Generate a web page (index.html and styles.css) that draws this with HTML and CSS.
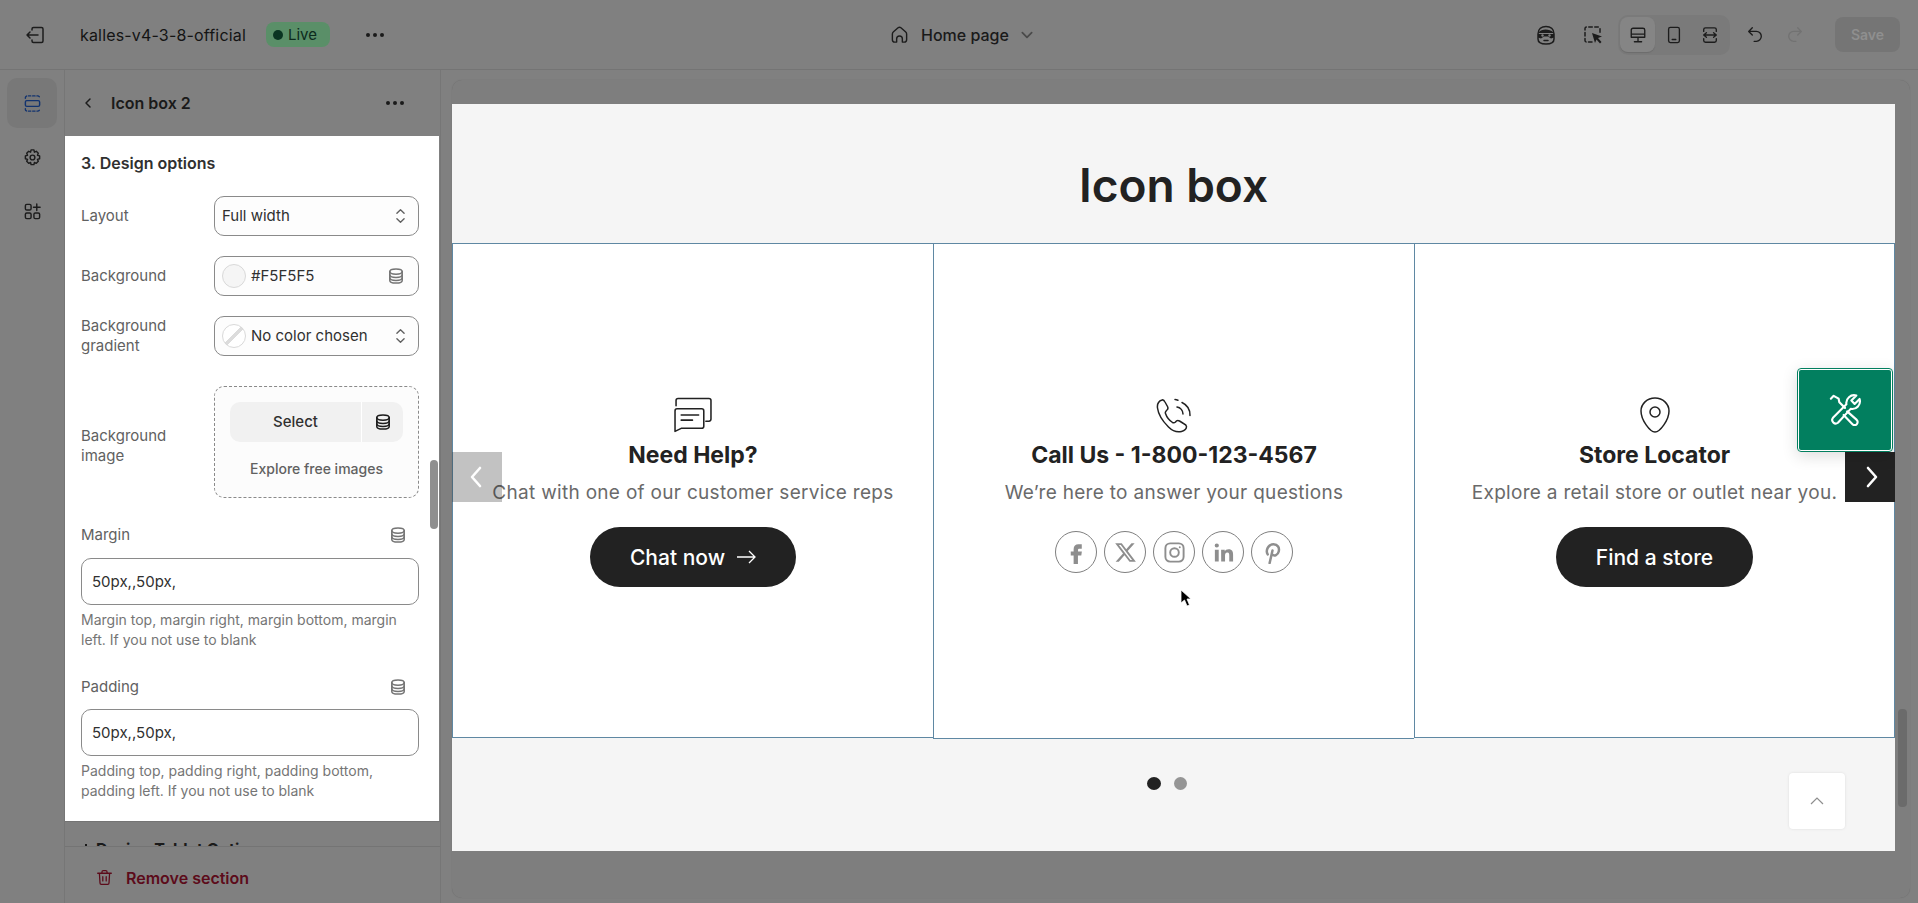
FILE: index.html
```html
<!DOCTYPE html>
<html lang="en">

<head>
    <meta charset="utf-8">
    <title>Icon box 2</title>
    <link rel="stylesheet" href="styles.css">
</head>

<body>
    <svg class="icon_defs" width="0" height="0">
        <symbol id="db" viewBox="0 0 16 16">
            <ellipse cx="8" cy="3.6" rx="6.2" ry="2.6" />
            <path d="M1.8 3.6v8.8c0 1.5 2.8 2.6 6.2 2.6s6.2-1.100 6.200-2.600V3.600" />
            <path d="M1.800 6.800c0 1.500 2.800 2.600 6.200 2.600s6.2-1.100 6.200-2.600M1.800 9.800c0 1.500 2.800 2.600 6.200 2.600s6.2-1.100 6.200-2.600" />
        </symbol>
        <symbol id="updown" viewBox="0 0 12 20">
            <path d="M2 7l4-4 4 4M2 13l4 4 4-4" />
        </symbol>
    </svg>

    <!-- TOP BAR -->
    <header class="topbar">
        <div class="topbar_left">
            <svg class="ic exit_icon" viewBox="0 0 20 20">
                <path d="M7 5V4a1.500 1.500 0 0 1 1.500-1.500h8A1.500 1.500 0 0 1 18 4v12a1.500 1.500 0 0 1-1.500 1.500h-8A1.500 1.500 0 0 1 7 16v-1" />
                <path d="M13 10H2M5 7l-3 3 3 3" />
            </svg>
            <span class="store_name">kalles-v4-3-8-official</span>
            <span class="live_badge"><i class="live_dot"></i>Live</span>
            <span class="dots topbar_dots"><i></i><i></i><i></i></span>
        </div>
        <div class="topbar_center">
            <svg class="ic home_icon" viewBox="0 0 20 20">
                <path d="M2.500 9.500c0-1 .5-1.800 1.200-2.400l4.800-4.200a2.300 2.300 0 0 1 3 0l4.800 4.200c.7.600 1.200 1.400 1.200 2.400v6a2.500 2.500 0 0 1-2.500 2.500H13v-3.500a3 3 0 0 0-6 0V18H5a2.500 2.500 0 0 1-2.500-2.500z" />
            </svg>
            <span class="page_name">Home page</span>
            <svg class="ic page_chevron" viewBox="0 0 12 12"><path d="M2 4l4 4 4-4" /></svg>
        </div>
        <div class="topbar_right">
            <svg class="ic robin_icon" viewBox="0 0 20 20">
                <path d="M2 9c0-5 3.500-7.500 8-7.500S18 4 18 9v5c0 3-3 5-8 5s-8-2-8-5z" />
                <path class="solid" d="M3 7c2-3.500 11-3.500 14 0v1H3zM2 9h16v3.500l-3 1-3-2H8l-3 2-3-1z" />
                <circle class="cut" cx="6.500" cy="10.500" r="1.200" />
                <circle class="cut" cx="13.500" cy="10.500" r="1.200" />
                <path d="M8 15.500h4" />
            </svg>
            <svg class="ic select_icon" viewBox="0 0 20 20">
                <path stroke-dasharray="3.500 2.500" d="M9 17H3.500A1.500 1.500 0 0 1 2 15.500v-12A1.500 1.500 0 0 1 3.500 2h12A1.500 1.500 0 0 1 17 3.500V8" />
                <path class="solid" d="M9 8l10 3.500-4 1.500 3.500 4-1.500 1.500-3.500-4L12 18z" />
            </svg>
            <div class="device_group">
                <span class="device_btn device_active">
                    <svg class="ic" viewBox="0 0 20 20">
                        <path d="M4.500 2.500h11A2 2 0 0 1 17.500 4.500v8h-15v-8a2 2 0 0 1 2-2zM2.500 9h15M10 12.500v5M6 17.500h8" />
                    </svg>
                </span>
                <span class="device_btn">
                    <svg class="ic" viewBox="0 0 20 20">
                        <rect x="4" y="1.500" width="12" height="17" rx="2" />
                        <path d="M8 15h4" />
                    </svg>
                </span>
                <span class="device_btn">
                    <svg class="ic" viewBox="0 0 20 20">
                        <path d="M3 6V4a2 2 0 0 1 2-2h10a2 2 0 0 1 2 2v2M3 14v2a2 2 0 0 0 2 2h10a2 2 0 0 0 2-2v-2M3 10h14M6 7.500L3 10l3 2.500M14 7.500l3 2.500-3 2.500" />
                    </svg>
                </span>
            </div>
            <svg class="ic undo_icon" viewBox="0 0 20 20"><path d="M7 2L3 6l4 4M3 6h8.500a5.500 5.500 0 0 1 0 11H9" /></svg>
            <svg class="ic redo_icon" viewBox="0 0 20 20"><path d="M13 2l4 4-4 4M17 6H8.500a5.500 5.500 0 0 0 0 11H11" /></svg>
            <span class="save_btn">Save</span>
        </div>
    </header>

    <div class="workspace">
        <!-- LEFT RAIL -->
        <nav class="rail">
            <span class="rail_btn rail_active">
                <svg class="ic" viewBox="0 0 20 20">
                    <rect x="2.500" y="7" width="15" height="6" rx="1.500" />
                    <path stroke-dasharray="2.500 2" d="M2.500 4.500v-.500a2 2 0 0 1 2-2h11a2 2 0 0 1 2 2v.500M2.500 15.500v.500a2 2 0 0 0 2 2h11a2 2 0 0 0 2-2v-.500" />
                </svg>
            </span>
            <span class="rail_btn">
                <svg class="ic" viewBox="0 0 20 20">
                    <path d="M8.500 2h3l.500 2.400 2-.900 2.100 2.100-.900 2 2.300.700v3l-2.300.700.900 2-2.100 2.100-2-.900-.500 2.300h-3l-.500-2.300-2 .900-2.100-2.100.900-2-2.300-.700v-3l2.300-.700-.900-2L6 3.500l2 .900z" />
                    <circle cx="10" cy="10" r="2.500" />
                </svg>
            </span>
            <span class="rail_btn">
                <svg class="ic" viewBox="0 0 20 20">
                    <rect x="2.500" y="2.500" width="6" height="6" rx="1.500" />
                    <rect x="2.500" y="11.500" width="6" height="6" rx="1.500" />
                    <rect x="11.500" y="11.500" width="6" height="6" rx="1.500" />
                    <path d="M14.500 2v7M11 5.500h7" />
                </svg>
            </span>
        </nav>

        <!-- SETTINGS PANEL -->
        <aside class="panel">
            <div class="panel_head">
                <svg class="ic back_icon" viewBox="0 0 12 12"><path d="M8 2L4 6l4 4" /></svg>
                <span class="panel_title">Icon box 2</span>
                <span class="dots panel_dots"><i></i><i></i><i></i></span>
            </div>

            <div class="panel_body">
                <h3 class="group_title">3. Design options</h3>

                <div class="row">
                    <label class="row_label">Layout</label>
                    <div class="field">
                        <span class="field_text">Full width</span>
                        <svg class="ic updown"><use href="#updown" /></svg>
                    </div>
                </div>

                <div class="row">
                    <label class="row_label">Background</label>
                    <div class="field">
                        <i class="swatch"></i>
                        <span class="field_text">#F5F5F5</span>
                        <svg class="ic db_icon"><use href="#db" /></svg>
                    </div>
                </div>

                <div class="row">
                    <label class="row_label">Background gradient</label>
                    <div class="field">
                        <i class="swatch swatch_none"></i>
                        <span class="field_text">No color chosen</span>
                        <svg class="ic updown"><use href="#updown" /></svg>
                    </div>
                </div>

                <div class="row row_image">
                    <label class="row_label">Background image</label>
                    <div class="image_box">
                        <div class="select_btn">
                            <span class="select_text">Select</span>
                            <span class="select_db"><svg class="ic db_icon db_dark"><use href="#db" /></svg></span>
                        </div>
                        <span class="explore">Explore free images</span>
                    </div>
                </div>

                <div class="stack stack_margin">
                    <div class="stack_head">
                        <label class="row_label">Margin</label>
                        <svg class="ic db_icon stack_db"><use href="#db" /></svg>
                    </div>
                    <div class="text_input">50px,,50px,</div>
                    <p class="hint">Margin top, margin right, margin bottom, margin left. If you not use to blank</p>
                </div>

                <div class="stack stack_padding">
                    <div class="stack_head">
                        <label class="row_label">Padding</label>
                        <svg class="ic db_icon stack_db"><use href="#db" /></svg>
                    </div>
                    <div class="text_input">50px,,50px,</div>
                    <p class="hint">Padding top, padding right, padding bottom, padding left. If you not use to blank</p>
                </div>

                <span class="panel_scroll"></span>
            </div>

            <div class="panel_more"><i class="more_mark"></i><span class="more_text">Design Tablet Options</span></div>

            <div class="panel_foot">
                <svg class="ic trash_icon" viewBox="0 0 20 20">
                    <path d="M2 5h16M7 5V3.500A1.500 1.500 0 0 1 8.500 2h3A1.500 1.500 0 0 1 13 3.500V5M4 5l.7 11.500A1.500 1.500 0 0 0 6.200 18h7.600a1.500 1.500 0 0 0 1.500-1.500L16 5M8 9v5M12 9v5" />
                </svg>
                <span class="remove_text">Remove section</span>
            </div>
        </aside>

        <!-- PREVIEW -->
        <main class="frame">
            <div class="page">
                <h1 class="page_title">Icon box</h1>

                <div class="boxes">
                    <div class="box">
                        <svg class="box_icon" viewBox="0 0 37 34">
                            <path d="M1 13a2 2 0 0 1 2-2h24a2 2 0 0 1 2 2v15a2 2 0 0 1-2 2H7l-6 3z" />
                            <path d="M2 8V3a2 2 0 0 1 2-2h30a2 2 0 0 1 2 2v18a2 2 0 0 1-2 2h-3M7 17h17M7 22h11" />
                        </svg>
                        <h2 class="box_title">Need Help?</h2>
                        <p class="box_text">Chat with one of our customer service reps</p>
                        <span class="box_btn">Chat now
                            <svg class="arrow_icon" viewBox="0 0 20 14"><path d="M1 7h18M13 1l6 6-6 6" /></svg>
                        </span>
                    </div>

                    <div class="box box_middle">
                        <svg class="box_icon" viewBox="0 0 36 36">
                            <path d="M6 3C3 4 1 7 1.500 11c1 8 6 14 11 19 4 4 9 5.500 13 4.500 3-.8 5-3 5-5 0-1-1-2-3-3l-4-2.500c-2-1-3-.500-4 1-1 1-2 1-3 .500-3-2-6-6-7-9-.500-1 0-2 1-3 1.500-1 2-2 1-4L9 5C8 3 7 2.600 6 3z" />
                            <path d="M19 2.500c1 0 2 .300 3 .700" />
                            <path d="M26 5.500a14 14 0 0 1 8 13" />
                            <path d="M21 10a7 7 0 0 1 6 7" />
                        </svg>
                        <h2 class="box_title">Call Us - 1-800-123-4567</h2>
                        <p class="box_text">We’re here to answer your questions</p>
                        <div class="socials">
                            <span class="social">
                                <svg viewBox="0 0 24 24"><path class="fill" d="M14 8h3.500V3.500H14c-3 0-5 2-5 5V11H6v4h3v9h4.500v-9H17l.6-4h-4V9c0-.6.400-1 1-1z" /></svg>
                            </span>
                            <span class="social">
                                <svg viewBox="0 0 24 24"><path class="fill" d="M18.244 2.250h3.308l-7.227 8.260 8.502 11.240H16.170l-5.214-6.817L4.990 21.750H1.680l7.730-8.835L1.254 2.250H8.080l4.713 6.231zm-1.161 17.520h1.833L7.084 4.126H5.117z" /></svg>
                            </span>
                            <span class="social">
                                <svg viewBox="0 0 24 24">
                                    <rect x="2.500" y="2.500" width="19" height="19" rx="5" />
                                    <circle cx="12" cy="12" r="4.500" />
                                    <circle class="fill" cx="17.500" cy="6.500" r="1" />
                                </svg>
                            </span>
                            <span class="social">
                                <svg viewBox="0 0 24 24"><path class="fill" d="M3 9h4v12.500H3zM5 2.500a2.200 2.200 0 1 1 0 4.400 2.200 2.200 0 0 1 0-4.400zM9.500 9h3.800v1.700c.6-1 2-2 4-2 3.900 0 4.700 2.500 4.700 5.700v7.100h-4v-6.300c0-1.500 0-3.300-2-3.300s-2.400 1.500-2.400 3.200v6.400h-4z" /></svg>
                            </span>
                            <span class="social">
                                <svg viewBox="0 0 24 24"><path class="thick" d="M9 23l3-13M7 14c-2.500-4 .5-10.500 6-10.500 4.500 0 6.500 3.500 5.500 7.500-.8 3.500-4.500 5.500-7 3" /></svg>
                            </span>
                        </div>
                    </div>

                    <div class="box">
                        <svg class="box_icon" viewBox="0 0 30 36">
                            <path d="M15 1C7 1 1 7 1 14c0 9 9 21 14 21s14-12 14-21C29 7 23 1 15 1z" />
                            <circle cx="15" cy="15" r="5" />
                        </svg>
                        <h2 class="box_title">Store Locator</h2>
                        <p class="box_text">Explore a retail store or outlet near you.</p>
                        <span class="box_btn">Find a store</span>
                    </div>
                </div>

                <div class="pager">
                    <i class="pager_dot pager_on"></i>
                    <i class="pager_dot"></i>
                </div>

                <span class="slide_arrow arrow_prev">
                    <svg viewBox="0 0 14 24"><path d="M11 3l-8 9 8 9" /></svg>
                </span>
                <span class="slide_arrow arrow_next">
                    <svg viewBox="0 0 14 24"><path d="M3 3l8 9-8 9" /></svg>
                </span>
                <span class="tool_btn">
                    <svg viewBox="0 0 24 24">
                        <path d="M3.500 17.500L13 8a5.500 5.500 0 0 1 7-6.200l-3.500 3.500 2.300 2.400 3.500-3.500a5.500 5.500 0 0 1-6.300 7L7 21a2.500 2.500 0 0 1-3.500-3.500z" />
                        <path d="M2 4l2-2 3.500 2 .5 2.500 4 4M13.500 13l6.800 6a2.100 2.100 0 0 1-3 3l-6.300-6.500" />
                    </svg>
                </span>
                <span class="top_btn">
                    <svg viewBox="0 0 16 10"><path d="M2 8l6-6 6 6" /></svg>
                </span>
                <svg class="cursor" viewBox="0 0 12 18">
                    <path d="M1 1v13l3.500-3 2.500 6 2.500-1-2.500-6H11z" />
                </svg>
            </div>
            <span class="frame_scroll"></span>
        </main>
    </div>
</body>

</html>
```

FILE: styles.css
```css
* {
    box-sizing: border-box;
}

html,
body {
    margin: 0;
    height: 903px;
    overflow: hidden;
}

body {
    font-family: Inter, "Liberation Sans", sans-serif;
    font-size: 15px;
    color: #161616;
    background-color: #808080;
}

.icon_defs {
    position: absolute;
}

.ic {
    fill: none;
    stroke: #1c1c1c;
    stroke-width: 1.5;
    stroke-linecap: round;
    stroke-linejoin: round;
    flex-shrink: 0;
}

.ic .solid {
    fill: #1c1c1c;
    stroke: none;
}

.ic .cut {
    fill: #808080;
    stroke: none;
}

.dots {
    display: flex;
    gap: 3px;
}

.dots i {
    width: 4px;
    height: 4px;
    border-radius: 50%;
    background-color: #1a1a1a;
}

/* top bar */
.topbar {
    height: 70px;
    display: flex;
    align-items: center;
    position: relative;
    background-color: #808080;
    border-bottom: 1px solid #747474;
}

.topbar_left {
    display: flex;
    align-items: center;
    padding-left: 25px;
}

.exit_icon {
    width: 20px;
    height: 20px;
}

.store_name {
    margin-left: 35px;
    font-size: 16px;
    letter-spacing: 0.17px;
    color: #141414;
}

.live_badge {
    display: flex;
    align-items: center;
    width: 64px;
    height: 25px;
    margin-left: 20px;
    padding-left: 7px;
    border-radius: 8px;
    font-size: 15px;
    color: #0c2b1c;
    background-color: #5a8f68;
}

.live_dot {
    width: 10px;
    height: 10px;
    margin-right: 5px;
    border-radius: 50%;
    background-color: #0a3522;
}

.topbar_dots {
    margin-left: 36px;
}

.topbar_center {
    position: absolute;
    left: 890px;
    display: flex;
    align-items: center;
}

.home_icon {
    width: 19px;
    height: 19px;
}

.page_name {
    margin-left: 12px;
    font-size: 16px;
    font-weight: 500;
    color: #1a1a1a;
}

.page_chevron {
    width: 14px;
    height: 14px;
    margin-left: 11px;
    stroke: #4a4a4a;
}

.topbar_right {
    margin-left: auto;
    padding-right: 18px;
    display: flex;
    align-items: center;
}

.robin_icon {
    width: 20px;
    height: 20px;
}

.select_icon {
    width: 20px;
    height: 20px;
    margin-left: 27px;
}

.device_group {
    display: flex;
    align-items: center;
    gap: 1px;
    height: 40px;
    width: 112px;
    margin-left: 15px;
    padding-left: 2px;
    border-radius: 10px;
    background-color: #7a7a7a;
}

.device_btn {
    width: 35px;
    height: 35px;
    display: flex;
    align-items: center;
    justify-content: center;
    border-radius: 8px;
}

.device_btn .ic {
    width: 18px;
    height: 18px;
}

.device_active {
    background-color: #858585;
    box-shadow: 0 1px 1px #6c6c6c;
}

.undo_icon,
.redo_icon {
    width: 18px;
    height: 18px;
}

.undo_icon {
    margin-left: 16px;
}

.redo_icon {
    margin-left: 22px;
    stroke: #727272;
}

.save_btn {
    width: 65px;
    height: 35px;
    margin-left: 31px;
    display: flex;
    align-items: center;
    justify-content: center;
    border-radius: 8px;
    font-size: 14px;
    font-weight: 600;
    color: #8f8f8f;
    background-color: #757575;
}

/* main area */
.workspace {
    display: flex;
    height: 833px;
}

.rail {
    width: 65px;
    display: flex;
    flex-direction: column;
    align-items: center;
    padding: 8px 0 0;
    gap: 4px;
    background-color: #808080;
    border-right: 1px solid #767676;
}

.rail_btn {
    width: 50px;
    height: 50px;
    display: flex;
    align-items: center;
    justify-content: center;
    border-radius: 10px;
}

.rail_btn .ic {
    width: 19px;
    height: 19px;
}

.rail_active {
    background-color: #787878;
}

.rail_active .ic {
    stroke: #12336f;
}

.panel {
    width: 376px;
    display: flex;
    flex-direction: column;
    background-color: #808080;
    border-right: 1px solid #767676;
}

.panel_head {
    height: 66px;
    flex-shrink: 0;
    display: flex;
    align-items: center;
    padding: 0 36px 0 17px;
}

.back_icon {
    width: 12px;
    height: 12px;
}

.panel_title {
    margin-left: 17px;
    font-size: 16px;
    font-weight: 600;
    color: #1a1a1a;
}

.panel_dots {
    margin-left: auto;
}

/* white part of the panel */
.panel_body {
    position: relative;
    width: 374px;
    height: 685px;
    flex-shrink: 0;
    padding: 0 20px 0 16px;
    overflow: hidden;
    background-color: #ffffff;
}

.group_title {
    margin: 0;
    padding-top: 17px;
    font-size: 16px;
    line-height: 20px;
    font-weight: 600;
    color: #303030;
}

.row {
    display: flex;
    align-items: center;
    height: 40px;
    margin-top: 20px;
}

.group_title + .row {
    margin-top: 23px;
}

.row_label {
    width: 133px;
    flex-shrink: 0;
    padding-right: 30px;
    font-size: 15px;
    line-height: 20px;
    color: #616161;
}

.field {
    width: 205px;
    height: 40px;
    display: flex;
    align-items: center;
    padding: 0 7px 1px;
    border: 1px solid #8a8a8a;
    border-radius: 10px;
    background-color: #fdfdfd;
}

.field_text {
    flex: 1;
    font-size: 15px;
    color: #303030;
}

.swatch {
    width: 24px;
    height: 24px;
    margin-right: 5px;
    border: 1px solid #d9d9d9;
    border-radius: 50%;
    background-color: #f5f5f5;
}

.swatch_none {
    background: linear-gradient(135deg, #fff 44%, #dcdcdc 44%, #dcdcdc 56%, #fff 56%);
}

.updown {
    width: 11px;
    height: 18px;
    margin-right: 5px;
    stroke: #616161;
}

.db_icon {
    width: 16px;
    height: 16px;
    margin-right: 7px;
    stroke: #757575;
}

.row_image {
    height: 112px;
    margin-top: 30px;
}

.row_image .row_label {
    padding-top: 8px;
}

.image_box {
    width: 205px;
    height: 112px;
    display: flex;
    flex-direction: column;
    align-items: center;
    padding-top: 15px;
    border: 1px dashed #8a8a8a;
    border-radius: 10px;
    background-color: #fcfcfc;
}

.select_btn {
    width: 173px;
    height: 40px;
    display: flex;
    border-radius: 10px;
    overflow: hidden;
    background-color: #f1f1f1;
}

.select_text {
    width: 132px;
    display: flex;
    align-items: center;
    justify-content: center;
    padding-bottom: 1px;
    font-size: 15px;
    font-weight: 500;
    color: #303030;
    border-right: 1px solid #fff;
}

.select_db {
    flex: 1;
    display: flex;
    align-items: center;
    justify-content: center;
}

.db_dark {
    margin: 0;
    stroke: #1c1c1c;
}

.explore {
    margin-top: 17px;
    font-size: 14px;
    font-weight: 450;
    line-height: 20px;
    color: #616161;
}

.stack {
    width: 338px;
}

.stack_margin {
    margin-top: 27px;
}

.stack_padding {
    margin-top: 27px;
}

.stack_head {
    display: flex;
    align-items: center;
    justify-content: space-between;
    height: 20px;
    margin-bottom: 13px;
}

.stack_padding .stack_head {
    margin-bottom: 12px;
}

.stack_db {
    margin-right: 13px;
}

.text_input {
    height: 47px;
    display: flex;
    align-items: center;
    padding-left: 10px;
    border: 1px solid #8a8a8a;
    border-radius: 10px;
    font-size: 15px;
    color: #303030;
}

.hint {
    margin: 5px 0 0;
    font-size: 14px;
    line-height: 20px;
    color: #757575;
}

.panel_scroll {
    position: absolute;
    right: 1px;
    top: 324px;
    width: 8px;
    height: 69px;
    border-radius: 4px;
    background-color: #8f8f8f;
}

.panel_more {
    position: relative;
    height: 26px;
    flex-shrink: 0;
    padding: 17px 0 0 31px;
    overflow: hidden;
    border-top: 1px solid #747474;
    border-bottom: 1px solid #747474;
}

.more_mark {
    position: absolute;
    left: 20px;
    top: 22px;
    width: 2px;
    height: 2px;
    background-color: #1a1a1a;
}

.more_text {
    display: block;
    font-size: 16px;
    line-height: 20px;
    font-weight: 700;
    color: #1a1a1a;
}

.panel_foot {
    flex: 1;
    display: flex;
    align-items: center;
    padding: 5px 0 0 31px;
}

.trash_icon {
    width: 17px;
    height: 17px;
    stroke: #5c0b1a;
}

.remove_text {
    margin-left: 13px;
    font-size: 16px;
    font-weight: 600;
    color: #5c0b1a;
}

/* preview frame */
.frame {
    position: relative;
    width: 1458px;
    height: 818px;
    margin: 10px 0 0 11px;
    padding-top: 24px;
    border-radius: 10px;
    background-color: #7e7e7e;
    box-shadow: 0 0 1px #666666;
}

.page {
    position: relative;
    width: 1443px;
    height: 747px;
    overflow: hidden;
    background-color: #f5f5f5;
}

.page_title {
    height: 139px;
    margin: 0;
    display: flex;
    align-items: center;
    justify-content: center;
    padding-top: 23px;
    font-size: 46px;
    font-weight: 600;
    color: #222222;
}

.boxes {
    display: grid;
    grid-template-columns: repeat(3, 1fr);
    height: 495px;
}

.box {
    display: flex;
    flex-direction: column;
    align-items: center;
    padding-top: 153px;
    text-align: center;
    background-color: #ffffff;
    border: solid #5f88a3;
    border-width: 1px 0 1px 1px;
}

.box:last-child {
    border-right-width: 1px;
}

.box_middle {
    margin-bottom: -1px;
}

.box_icon {
    height: 36px;
    width: 38px;
    fill: none;
    stroke: #222222;
    stroke-width: 1.5;
    stroke-linecap: round;
    stroke-linejoin: round;
}

.box_title {
    margin: 6px 0 0;
    font-size: 23px;
    line-height: 33px;
    font-weight: 700;
    color: #222222;
}

.box_text {
    margin: 6px 0 0;
    font-size: 19px;
    line-height: 30px;
    letter-spacing: 0.3px;
    white-space: nowrap;
    color: #6a6a6a;
}

.box_btn {
    display: flex;
    align-items: center;
    justify-content: center;
    gap: 11px;
    height: 60px;
    min-width: 195px;
    margin-top: 19px;
    padding: 0 40px;
    border-radius: 30px;
    font-size: 21px;
    font-weight: 500;
    color: #ffffff;
    background-color: #222222;
}

.arrow_icon {
    width: 20px;
    height: 14px;
    fill: none;
    stroke: #ffffff;
    stroke-width: 1.3;
}

.socials {
    display: flex;
    gap: 7px;
    margin-top: 23px;
}

.social {
    width: 42px;
    height: 42px;
    display: flex;
    align-items: center;
    justify-content: center;
    border: 1px solid #7f7f7f;
    border-radius: 50%;
}

.social svg {
    width: 23px;
    height: 23px;
    fill: none;
    stroke: #8e8e8e;
    stroke-width: 2;
}

.social .fill {
    fill: #8e8e8e;
    stroke: none;
}

.social .thick {
    stroke-width: 2.600;
    stroke-linecap: round;
}

.pager {
    display: flex;
    gap: 13px;
    padding: 39px 0 0 695px;
}

.pager_dot {
    width: 13px;
    height: 13px;
    border-radius: 50%;
    background-color: #959595;
}

.pager_on {
    width: 14px;
    background-color: #222222;
}

/* things lying over the slider */
.slide_arrow {
    position: absolute;
    width: 50px;
    height: 50px;
    top: 348px;
    display: flex;
    align-items: center;
    justify-content: center;
    background-color: #222222;
}

.slide_arrow svg {
    width: 14px;
    height: 24px;
    fill: none;
    stroke: #ffffff;
    stroke-width: 2.600;
    stroke-linecap: round;
    stroke-linejoin: round;
}

.arrow_prev {
    left: 0;
    opacity: 0.27;
    padding-right: 2px;
}

.arrow_next {
    right: 0;
    padding-left: 4px;
}

.tool_btn {
    position: absolute;
    top: 264px;
    left: 1345px;
    width: 96px;
    height: 84px;
    display: flex;
    align-items: center;
    justify-content: center;
    border: 2px solid #ffffff;
    outline: 1px solid #027f5f;
    outline-offset: -1px;
    border-radius: 4px;
    background-color: #027f5f;
    box-shadow: 0 4px 16px rgba(0, 0, 0, 0.14);
}

.tool_btn svg {
    width: 34px;
    height: 34px;
    fill: none;
    stroke: #ffffff;
    stroke-width: 1.500;
    stroke-linecap: round;
    stroke-linejoin: round;
}

.top_btn {
    position: absolute;
    left: 1337px;
    top: 669px;
    width: 56px;
    height: 56px;
    display: flex;
    align-items: center;
    justify-content: center;
    border-radius: 4px;
    background-color: #ffffff;
    box-shadow: 0 0 3px rgba(0, 0, 0, 0.1);
}

.top_btn svg {
    width: 16px;
    height: 10px;
    fill: none;
    stroke: #8e8e8e;
    stroke-width: 1.200;
}

.cursor {
    position: absolute;
    left: 728px;
    top: 485px;
    width: 12px;
    height: 18px;
    fill: #000000;
    stroke: #ffffff;
    stroke-width: 0.800;
}

.frame_scroll {
    position: absolute;
    left: 1446px;
    top: 629px;
    width: 9px;
    height: 98px;
    border-radius: 4px;
    background-color: #6b6b6b;
}
```
